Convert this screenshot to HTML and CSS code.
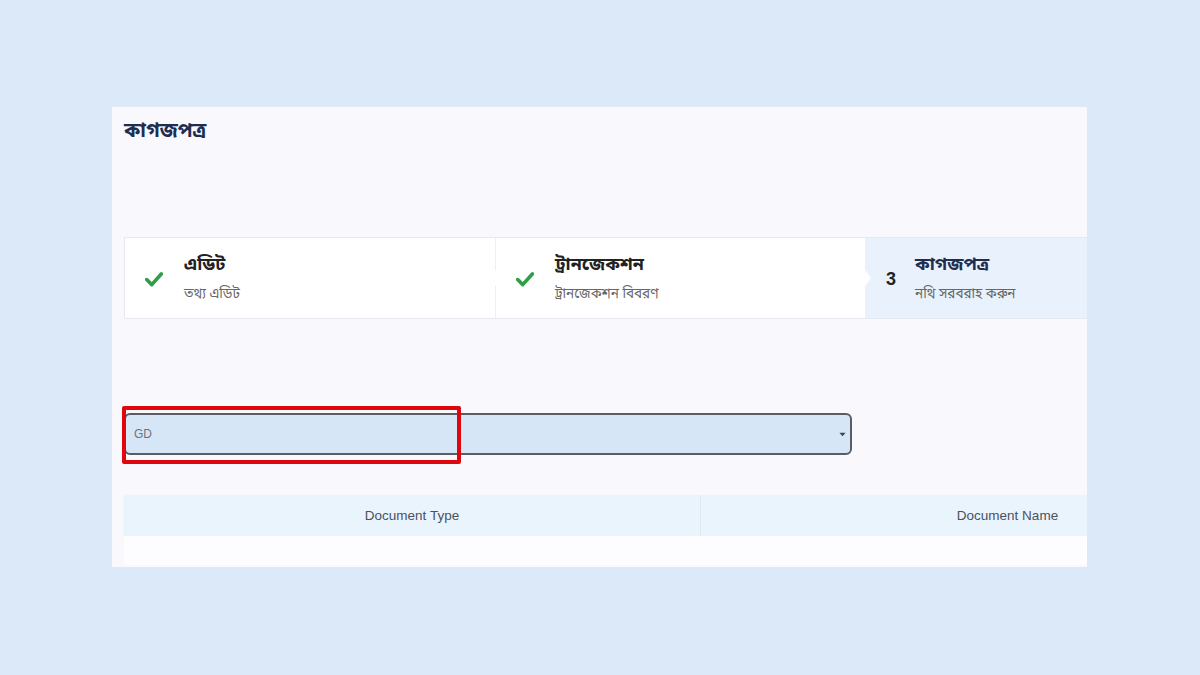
FILE: index.html
```html
<!DOCTYPE html>
<html lang="bn">
<head>
<meta charset="utf-8">
<link rel="stylesheet" href="styles.css">
</head>
<body>
<div class="panel">
  <h1 class="title">কাগজপত্র</h1>
  <div class="stepper">
    <div class="step">
      <svg class="check" viewBox="0 0 16 14" width="18" height="16"><path d="M1.5 7.5 L6 12 L14.5 2.5" fill="none" stroke="#2f9e4a" stroke-width="3.2" stroke-linecap="round" stroke-linejoin="round"/></svg>
      <div class="step-text">
        <div class="step-title">এডিট</div>
        <div class="step-sub">তথ্য এডিট</div>
      </div>
    </div>
    <div class="step">
      <span class="arrow"></span>
      <svg class="check" viewBox="0 0 16 14" width="18" height="16"><path d="M1.5 7.5 L6 12 L14.5 2.5" fill="none" stroke="#2f9e4a" stroke-width="3.2" stroke-linecap="round" stroke-linejoin="round"/></svg>
      <div class="step-text">
        <div class="step-title">ট্রানজেকশন</div>
        <div class="step-sub">ট্রানজেকশন বিবরণ</div>
      </div>
    </div>
    <div class="step active">
      <span class="arrow"></span>
      <span class="num">3</span>
      <div class="step-text">
        <div class="step-title">কাগজপত্র</div>
        <div class="step-sub">নথি সরবরাহ করুন</div>
      </div>
    </div>
  </div>
  <div class="select-wrap">
    <div class="select">
      <span class="select-value">GD</span>
      <svg class="caret" viewBox="0 0 8 5" width="7" height="5"><path d="M0.5 0.5 L4 4.5 L7.5 0.5 Z" fill="#444"/></svg>
    </div>
    <div class="highlight"></div>
  </div>
  <div class="table">
    <div class="thead">
      <div class="th">Document Type</div>
      <div class="th">Document Name</div>
    </div>
    <div class="tbody"></div>
  </div>
</div>
</body>
</html>
```
FILE: styles.css
```css
html, body {
  margin: 0;
  padding: 0;
}
body {
  background: #dbe9f8;
  font-family: "Noto Sans Bengali", "Lohit Bengali", "FreeSans", "Noto Sans", "Liberation Sans", sans-serif;
  width: 1200px;
  height: 675px;
  overflow: hidden;
}
.panel {
  margin: 107px 0 0 112px;
  width: 975px;
  height: 460px;
  background: #f8f8fd;
  overflow: hidden;
  padding: 12px 0 0 12px;
  box-sizing: border-box;
}
.title {
  margin: 0;
  font-size: 20px;
  font-weight: 700;
  color: #1f2d50;
  line-height: 26px;
}
.stepper {
  margin-top: 92px;
  display: grid;
  grid-template-columns: 370px 370px 370px;
  width: 1110px;
  height: 82px;
  border: 1px solid #e6e9ef;
  box-sizing: border-box;
  background: #fff;
}
.step {
  position: relative;
  display: flex;
  align-items: center;
  padding-left: 20px;
  background: #fff;
}
.step + .step {
  border-left: 1px solid #eceff3;
}
.step.active {
  background: #e9f2fc;
}
.arrow {
  position: absolute;
  left: -1px;
  top: 50%;
  width: 0;
  height: 0;
  margin-top: -8px;
  border-top: 8px solid transparent;
  border-bottom: 8px solid transparent;
  border-left: 6px solid #fff;
}
.check {
  margin-right: 21px;
  margin-top: 1px;
}
.num {
  font-family: "Liberation Sans", Arial, sans-serif;
  font-weight: 700;
  font-size: 18px;
  color: #222;
  margin-right: 19px;
  margin-top: 2px;
}
.step-text {
  display: flex;
  flex-direction: column;
  gap: 9px;
}
.step-title {
  font-size: 18px;
  font-weight: 700;
  color: #222;
  line-height: 24px;
}
.active .step-title {
  color: #1f2d50;
}
.step-sub {
  font-size: 13.5px;
  color: #666;
  line-height: 18px;
}
.select-wrap {
  position: relative;
  margin-top: 94px;
  width: 728px;
}
.select {
  height: 42px;
  box-sizing: border-box;
  border: 2px solid #5a5d63;
  border-radius: 6px;
  background: #d6e6f6;
  display: flex;
  align-items: center;
  justify-content: space-between;
  padding: 0 3px 0 8px;
}
.select-value {
  font-family: "Liberation Sans", Arial, sans-serif;
  font-size: 12px;
  color: #6f7378;
}
.caret {
  margin-right: 1px;
}
.highlight {
  position: absolute;
  left: -2px;
  top: -7px;
  width: 339px;
  height: 58px;
  border: 4px solid #e0060e;
  border-radius: 2px;
  box-sizing: border-box;
}
.table {
  margin-top: 40px;
  width: 1190px;
}
.thead {
  display: grid;
  grid-template-columns: 576px 614px;
  height: 41px;
  background: #eaf4fd;
  box-shadow: 0 1px 2px rgba(0,0,0,0.07);
}
.tbody {
  height: 29px;
  background: #fdfcff;
}
.th {
  display: flex;
  align-items: center;
  justify-content: center;
  font-family: "Liberation Sans", Arial, sans-serif;
  font-size: 13.5px;
  color: #4a5160;
}
.th + .th {
  border-left: 1px solid #e0e8f0;
}
```
